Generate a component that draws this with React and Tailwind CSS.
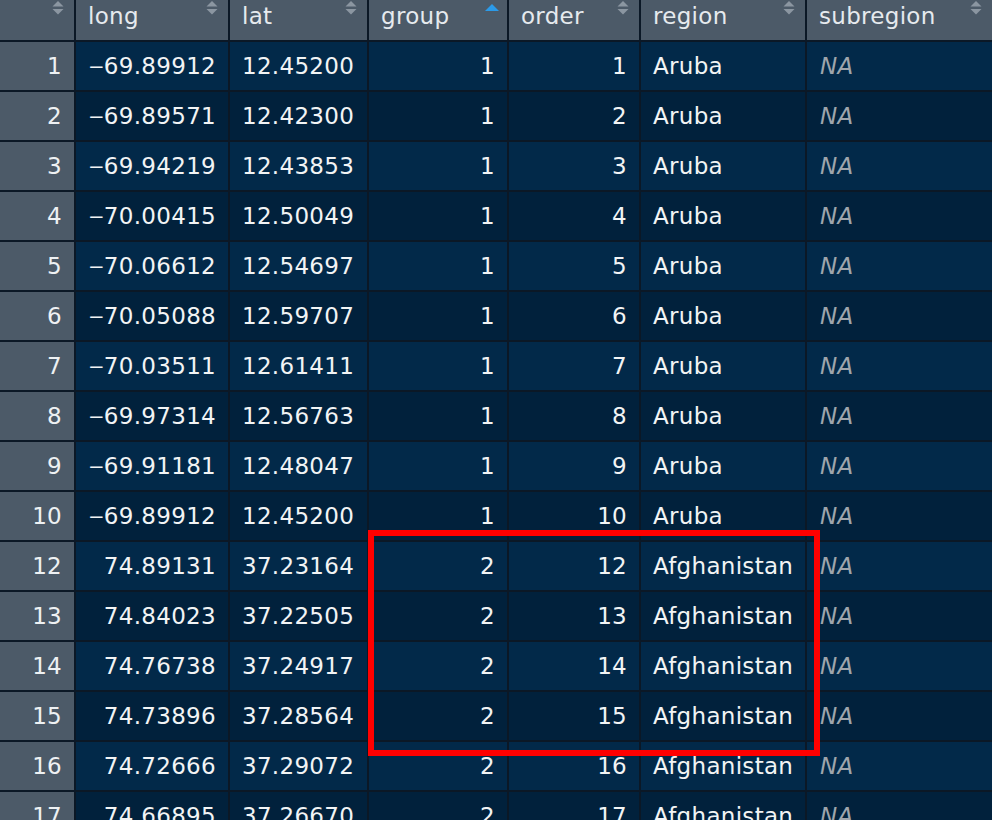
import React from 'react';

const rows = [
  ['1', '‒69.89912', '12.45200', '1', '1', 'Aruba'],
  ['2', '‒69.89571', '12.42300', '1', '2', 'Aruba'],
  ['3', '‒69.94219', '12.43853', '1', '3', 'Aruba'],
  ['4', '‒70.00415', '12.50049', '1', '4', 'Aruba'],
  ['5', '‒70.06612', '12.54697', '1', '5', 'Aruba'],
  ['6', '‒70.05088', '12.59707', '1', '6', 'Aruba'],
  ['7', '‒70.03511', '12.61411', '1', '7', 'Aruba'],
  ['8', '‒69.97314', '12.56763', '1', '8', 'Aruba'],
  ['9', '‒69.91181', '12.48047', '1', '9', 'Aruba'],
  ['10', '‒69.89912', '12.45200', '1', '10', 'Aruba'],
  ['12', '74.89131', '37.23164', '2', '12', 'Afghanistan'],
  ['13', '74.84023', '37.22505', '2', '13', 'Afghanistan'],
  ['14', '74.76738', '37.24917', '2', '14', 'Afghanistan'],
  ['15', '74.73896', '37.28564', '2', '15', 'Afghanistan'],
  ['16', '74.72666', '37.29072', '2', '16', 'Afghanistan'],
  ['17', '74.66895', '37.26670', '2', '17', 'Afghanistan'],
];

const cols = 'grid grid-cols-[74px_152px_137px_138px_130px_164px_1fr] gap-[2px]';

// up/down arrows shown in each header cell
const SortIcon = ({ active }) =>
  active ? (
    <svg width="16" height="14" viewBox="0 0 16 14" className="absolute right-[7px] top-[2px]">
      <path d="M1 9 L8 2 L15 9 Z" fill="#2b9ae8" />
    </svg>
  ) : (
    <svg width="12" height="16" viewBox="0 0 12 16" className="absolute right-[10px] top-0">
      <path d="M0.5 6.5 L6 1 L11.5 6.5 Z" fill="#8b96a1" />
      <path d="M0.5 9 L6 14.5 L11.5 9 Z" fill="#8b96a1" />
    </svg>
  );

const HeadCell = ({ label, active }) => (
  <div className="relative h-[40px] bg-[#4c5a68] pl-[12px] pt-[1px] text-[#e6eaee] leading-[30px]">
    {label}
    <SortIcon active={active} />
  </div>
);

export default function App() {
  return (
    <div className="relative w-[992px] h-[820px] overflow-hidden bg-[#0b1826] text-[23px] tracking-[0.3px] font-['DejaVu_Sans',sans-serif]">
      <div className="flex flex-col gap-[2px]">
        <div className={cols}>
          <HeadCell label="" />
          <HeadCell label="long" />
          <HeadCell label="lat" />
          <HeadCell label="group" active />
          <HeadCell label="order" />
          <HeadCell label="region" />
          <HeadCell label="subregion" />
        </div>

        {rows.map((r, i) => {
          const bg = i % 2 === 0 ? 'bg-[#022949]' : 'bg-[#01213c]';
          return (
            <div key={r[0]} className={cols}>
              <div className="h-[48px] bg-[#4c5a68] pr-[12px] flex items-center justify-end text-[#eef1f3]">{r[0]}</div>
              <div className={`${bg} h-[48px] flex items-center justify-end pr-[12px] text-[#f2f4f5]`}>{r[1]}</div>
              <div className={`${bg} h-[48px] pl-[12px] flex items-center text-[#f2f4f5]`}>{r[2]}</div>
              <div className={`${bg} h-[48px] pr-[12px] flex items-center justify-end text-[#f2f4f5]`}>{r[3]}</div>
              <div className={`${bg} h-[48px] pr-[12px] flex items-center justify-end text-[#f2f4f5]`}>{r[4]}</div>
              <div className={`${bg} h-[48px] pl-[12px] flex items-center text-[#f2f4f5]`}>{r[5]}</div>
              <div className={`${bg} h-[48px] pl-[13px] flex items-center italic text-[#9ea5ac]`}>NA</div>
            </div>
          );
        })}
      </div>

      {/* annotation box */}
      <div className="absolute left-[368px] top-[530px] w-[452px] h-[226px] border-[6px] border-[#ff0000]" />
    </div>
  );
}
